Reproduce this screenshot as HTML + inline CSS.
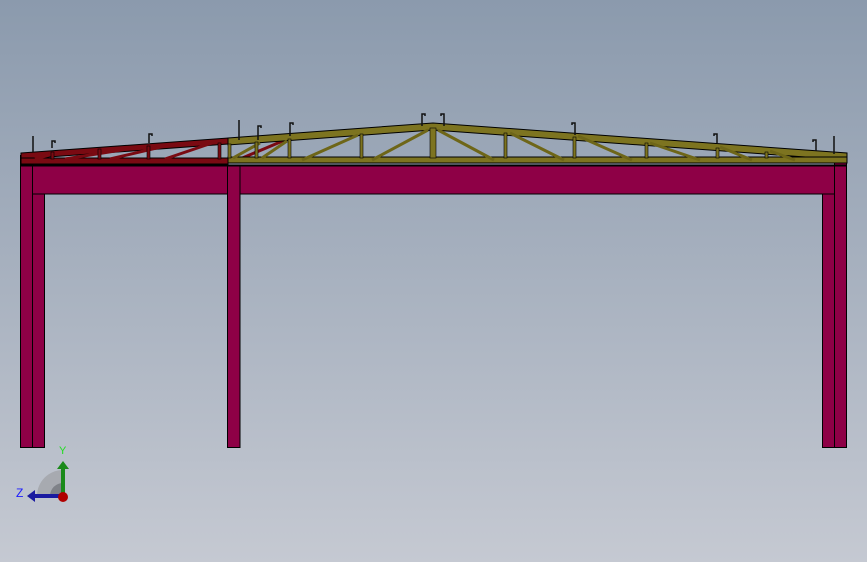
<!DOCTYPE html>
<html><head><style>
html,body{margin:0;padding:0;}
body{width:867px;height:562px;overflow:hidden;background:linear-gradient(#8b9aad,#c5c9d2);font-family:"Liberation Sans",sans-serif;}
svg{position:absolute;left:0;top:0}
</style></head><body>
<svg width="867" height="562" viewBox="0 0 867 562">
<g stroke="#000" stroke-width="1">
<rect x="20.5" y="165.5" width="826" height="28.5" fill="#8e0046"/>
<rect x="20.5" y="155.5" width="12" height="292" fill="#8e0046"/>
<rect x="32.5" y="194" width="12" height="253.5" fill="#8e0046"/>
<rect x="227.5" y="165.5" width="12.5" height="282" fill="#8e0046"/>
<rect x="834.5" y="155.5" width="12" height="292" fill="#8e0046"/>
<rect x="822.5" y="194" width="12" height="253.5" fill="#8e0046"/>
</g>
<line x1="20" y1="165.5" x2="847" y2="165.5" stroke="#000" stroke-width="2"/>
<g stroke="#000" stroke-width="1">
<polygon points="21,153 228,138 228,144 21,159" fill="#7a0a12"/>
<rect x="21" y="158" width="207" height="6" fill="#7a0a12"/>
</g>
<g stroke="#7a0a12" stroke-width="3">
<line x1="35" y1="159" x2="60" y2="152"/>
<line x1="65" y1="159" x2="140" y2="147"/>
<line x1="110" y1="159" x2="165" y2="146"/>
<line x1="165" y1="159" x2="215" y2="142"/>
<line x1="240" y1="159" x2="285" y2="140"/>
</g>
<g stroke="#000" stroke-width="0.6" fill="#7a0a12">
<rect x="51" y="152" width="3" height="7"/><rect x="98" y="149" width="3" height="10"/>
<rect x="147" y="146" width="3" height="13"/><rect x="218" y="143" width="3" height="16"/>
</g>
<g stroke="#000" stroke-width="1" fill="#7d7420">
<polygon points="228,138 433,123 847,153 847,160 433,130 228,145"/>
<rect x="228" y="157" width="619" height="6"/>
</g>
<g stroke="#6e6618" stroke-width="3">
<line x1="233" y1="158" x2="260" y2="143"/>
<line x1="262" y1="158" x2="287" y2="141"/>
<line x1="302" y1="160" x2="358" y2="135"/>
<line x1="372" y1="160" x2="428" y2="130"/>
<line x1="438" y1="130" x2="494" y2="160"/>
<line x1="510" y1="133" x2="564" y2="160"/>
<line x1="578" y1="136" x2="632" y2="160"/>
<line x1="650" y1="143" x2="700" y2="160"/>
<line x1="720" y1="147" x2="752" y2="160"/>
<line x1="770" y1="151" x2="795" y2="160"/>
</g>
<g stroke="#000" stroke-width="0.6" fill="#7d7420">
<rect x="228" y="144" width="3" height="14"/><rect x="255" y="142" width="3" height="16"/>
<rect x="288" y="139" width="3" height="19"/><rect x="360" y="134" width="3" height="24"/>
<rect x="430" y="128" width="6" height="30"/><rect x="504" y="133" width="3" height="25"/>
<rect x="573" y="137" width="3" height="21"/><rect x="645" y="143" width="3" height="15"/>
<rect x="716" y="148" width="3" height="10"/><rect x="765" y="152" width="3" height="6"/>
</g>
<g stroke="#111" stroke-width="1.5" fill="none">
<line x1="33" y1="136" x2="33" y2="152"/><line x1="239" y1="120" x2="239" y2="140"/><line x1="834" y1="136" x2="834" y2="154"/>
<path d="M52,148 V141 h3 v2"/><path d="M149,143 V134 h3 v2"/><path d="M258,140 V126 h3 v2"/><path d="M290,136 V123 h3 v2"/>
<path d="M422,126 V114 h3 v2"/><path d="M444,126 V114 h-3 v2"/><path d="M575,135 V123 h-3 v2"/><path d="M717,143 V134 h-3 v2"/><path d="M816,151 V140 h-3 v2"/>
</g>
<path d="M37,496 A26,26 0 0 1 63,470 V496 Z" fill="#a7aab0"/>
<path d="M50,496 A13,13 0 0 1 63,483 V496 Z" fill="#7f8288"/>
<rect x="61" y="468" width="4" height="28" fill="#1a8a1a"/>
<polygon points="57,469 63,461 69,469" fill="#1a8a1a"/>
<rect x="34" y="494" width="28" height="4" fill="#1a1aa0"/>
<polygon points="35,490 27,496 35,502" fill="#1a1aa0"/>
<circle cx="63" cy="497" r="5" fill="#b00000"/>
<text x="59" y="454" font-size="11" fill="#22dd22" font-family="Liberation Sans">Y</text>
<text x="16" y="497" font-size="12" fill="#1a1aff" font-family="Liberation Sans">Z</text>
</svg>
</body></html>
